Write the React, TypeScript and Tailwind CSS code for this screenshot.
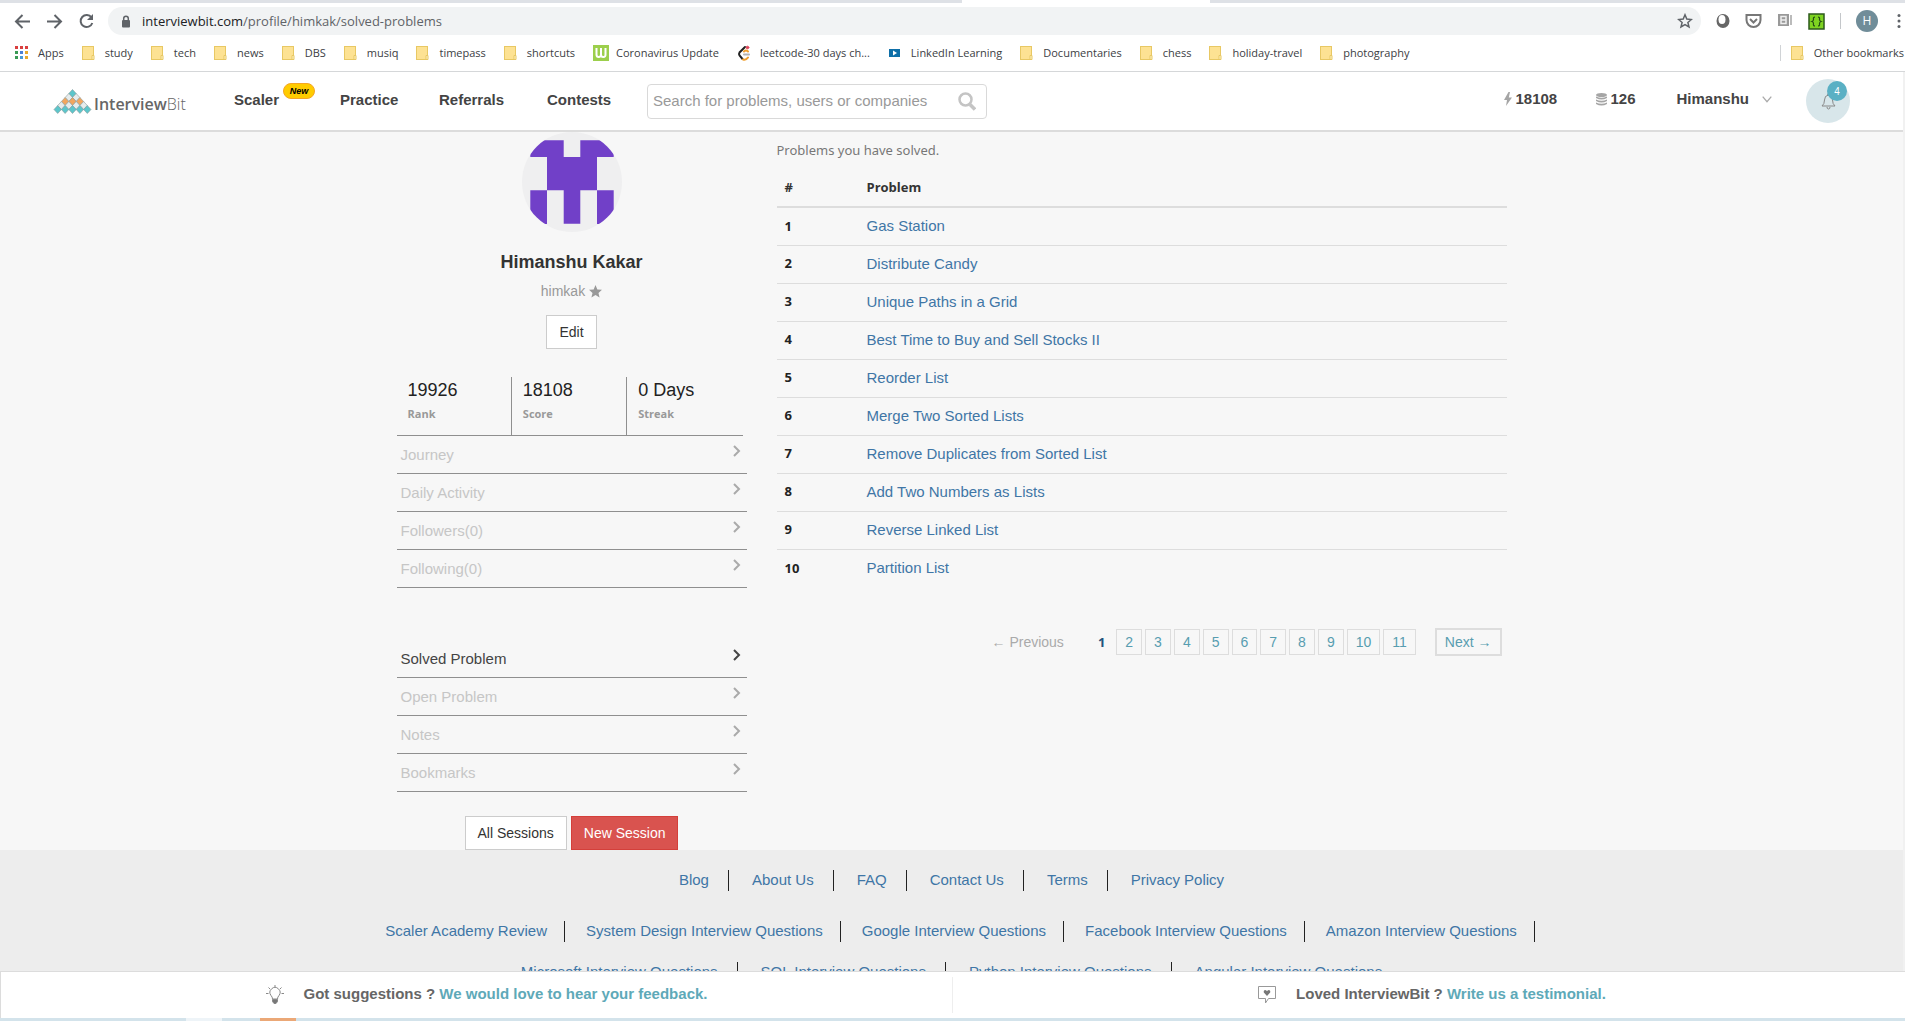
import React from "react";

const problems = [
  "Gas Station",
  "Distribute Candy",
  "Unique Paths in a Grid",
  "Best Time to Buy and Sell Stocks II",
  "Reorder List",
  "Merge Two Sorted Lists",
  "Remove Duplicates from Sorted List",
  "Add Two Numbers as Lists",
  "Reverse Linked List",
  "Partition List",
];

const bookmarks: { label: string; icon: "apps" | "folder" | "w" | "leet" | "linkedin" }[] = [
  { label: "Apps", icon: "apps" },
  { label: "study", icon: "folder" },
  { label: "tech", icon: "folder" },
  { label: "news", icon: "folder" },
  { label: "DBS", icon: "folder" },
  { label: "musiq", icon: "folder" },
  { label: "timepass", icon: "folder" },
  { label: "shortcuts", icon: "folder" },
  { label: "Coronavirus Update", icon: "w" },
  { label: "leetcode-30 days ch...", icon: "leet" },
  { label: "LinkedIn Learning", icon: "linkedin" },
  { label: "Documentaries", icon: "folder" },
  { label: "chess", icon: "folder" },
  { label: "holiday-travel", icon: "folder" },
  { label: "photography", icon: "folder" },
];

function FolderIcon() {
  return (
    <svg width="16" height="16" viewBox="0 0 16 16">
      <rect x="0.500" y="1.500" width="11" height="13" fill="#fde293" stroke="#e8c864" />
      <path d="M10 14.500v-4h2v4z" fill="#fff3c4" stroke="#e8c864" />
    </svg>
  );
}

function BookmarkIcon({ kind }: { kind: string }) {
  if (kind === "folder") return <FolderIcon />;
  if (kind === "apps") {
    const colors = ["#d93f3f", "#d93f3f", "#d93f3f", "#3a9a54", "#4a7fd6", "#e8a92c", "#3a9a54", "#4a9ad6", "#e8a92c"];
    return (
      <svg width="16" height="16" viewBox="0 0 16 16">
        {colors.map((c, i) => (
          <rect key={i} x={(i % 3) * 5} y={1 + Math.floor(i / 3) * 5} width="3" height="3" fill={c} />
        ))}
      </svg>
    );
  }
  if (kind === "w") {
    return (
      <svg width="16" height="16" viewBox="0 0 16 16">
        <rect width="16" height="16" fill="#9ccf4c" />
        <path d="M3.500 3v6.500q0 2.500 2.200 2.500t2.300-2.500V3M8 9.500q0 2.500 2.300 2.500t2.200-2.500V3" fill="none" stroke="#fff" strokeWidth="2" />
      </svg>
    );
  }
  if (kind === "leet") {
    return (
      <svg width="16" height="16" viewBox="0 0 16 16" fill="none" strokeLinecap="round" strokeWidth="2">
        <path d="M8 2 2.500 7.500q-1 1.500 0 3L5.500 14" stroke="#222" />
        <path d="M6 14.500q3 1 5-2M7 6.500q2-2 4 0" stroke="#f0a030" />
        <path d="M7 9.500h5" stroke="#b3b3b3" />
        <circle cx="10.500" cy="2.500" r="1.300" fill="#e0455a" stroke="#e0455a" strokeWidth="1" />
      </svg>
    );
  }
  return (
    <svg width="16" height="16" viewBox="0 0 16 16">
      <rect x="1" y="4" width="11" height="8" fill="#0e6fa8" />
      <path d="M5 5.500v5L9 8z" fill="#fff" />
    </svg>
  );
}

function BrowserChrome() {
  return (
    <div className="shrink-0 border-b border-[#d5d7d9] bg-white font-['Open_Sans',sans-serif]">
      <div className="flex h-[3px] bg-[#dee1e6]">
        <div className="ml-[50.5%] w-[13%] bg-white" />
      </div>
      <div className="flex h-9 items-center pl-3.5 pr-1 text-[#5f6368]">
        <div className="flex w-[94px] shrink-0 items-center gap-[15px]">
          <button aria-label="Back">
            <svg width="17" height="17" viewBox="0 0 17 17" fill="none" stroke="#5f6368" strokeWidth="2"><path d="M16 8.500H2.500M8.500 2 2 8.500 8.500 15" /></svg>
          </button>
          <button aria-label="Forward">
            <svg width="17" height="17" viewBox="0 0 17 17" fill="none" stroke="#5f6368" strokeWidth="2"><path d="M1 8.500h13.500M8.500 2 15 8.500 8.500 15" /></svg>
          </button>
          <button aria-label="Reload">
            <svg width="17" height="17" viewBox="0 0 17 17" fill="none" stroke="#5f6368" strokeWidth="2"><path d="M13.500 4.500A6 6 0 1 0 14.300 10" /><path d="M15 1v6H9z" fill="#5f6368" stroke="none" /></svg>
          </button>
        </div>
        <div className="flex h-7 flex-1 items-center rounded-full bg-[#f1f3f4] pl-[13px] pr-2">
          <svg width="10" height="13" viewBox="0 0 10 13"><rect x="1" y="5" width="8" height="7.500" rx="1" fill="#5f6368" /><path d="M2.700 5V3.500a2.300 2.300 0 0 1 4.600 0V5" fill="none" stroke="#5f6368" strokeWidth="1.500" /></svg>
          <span className="ml-[11px] flex-1 text-[13px] leading-5">
            <span className="text-[#202124]">interviewbit.com</span>/profile/himkak/solved-problems
          </span>
          <button aria-label="Bookmark this page">
            <svg width="16" height="16" viewBox="0 0 16 16" fill="none" stroke="#5f6368" strokeWidth="1.500"><path d="m8 1.800 1.800 4.300 4.600.4-3.500 3 1.100 4.500L8 11.600 4 14l1.100-4.500-3.500-3 4.600-.4z" /></svg>
          </button>
        </div>
        <div className="ml-[15px] flex shrink-0 items-center gap-[15px]">
          <svg width="14" height="16" viewBox="0 0 14 16"><ellipse cx="7" cy="8" rx="6.500" ry="7" fill="#666" /><ellipse cx="6" cy="6.500" rx="3.500" ry="4.500" fill="#fff" /></svg>
          <svg width="17" height="16" viewBox="0 0 17 16" fill="none" stroke="#777" strokeWidth="2"><path d="M1.500 2h14v5a7 7 0 0 1-14 0z" /><path d="m5 6 3.500 3.500L12 6" /></svg>
          <svg width="16" height="16" viewBox="0 0 16 16"><rect x="1" y="1" width="11" height="12" fill="#999" /><rect x="13" y="2" width="2" height="10" fill="#bbb" /><path d="M4 3.500h5v7H4zM4 7h5" fill="none" stroke="#eee" strokeWidth="1.500" /></svg>
          <svg width="17" height="17" viewBox="0 0 17 17"><rect x="1" y="1" width="15" height="15" fill="#7ed321" stroke="#2c5a1b" strokeWidth="1.500" /><path d="M7 4q-2 0-1.500 2.500Q5.500 8 4 8.500q1.500.5 1.500 2Q5 13 7 13M10 4q2 0 1.500 2.500Q11.500 8 13 8.500q-1.500.5-1.500 2Q12 13 10 13" fill="none" stroke="#234d14" strokeWidth="1.200" /></svg>
          <span className="h-4 w-px bg-[#c4c7ca]" />
          <span className="flex size-[22px] items-center justify-center rounded-full bg-[#708d99] text-xs text-white">H</span>
          <button aria-label="Menu" className="pl-1">
            <svg width="4" height="16" viewBox="0 0 4 16" fill="#5f6368"><circle cx="2" cy="2.500" r="1.500" /><circle cx="2" cy="8" r="1.500" /><circle cx="2" cy="13.500" r="1.500" /></svg>
          </button>
        </div>
      </div>
      <nav aria-label="Bookmarks" className="flex h-8 items-center pb-1 pl-[15px] text-[11px] whitespace-nowrap text-[#3c4043]">
        <div className="flex items-center gap-[18px]">
          {bookmarks.map((b) => (
            <a key={b.label} href="#" className="flex items-center gap-[7px]">
              <BookmarkIcon kind={b.icon} />
              {b.label}
            </a>
          ))}
        </div>
        <div className="ml-auto flex items-center border-l border-[#d0d3d6] pr-px pl-2.5">
          <a href="#" className="flex items-center gap-[7px]">
            <FolderIcon />
            Other bookmarks
          </a>
        </div>
      </nav>
    </div>
  );
}

function Logo() {
  const dots: [number, number, string][] = [];
  for (let r = 0; r < 5; r++) {
    for (let i = 0; i <= r; i++) {
      const color = r === 2 ? "#f2a65e" : r % 2 === 0 ? "#5cc6cb" : "#e6ecec";
      dots.push([19 + (i - r / 2) * 7.4, 4.5 + r * 4, color]);
    }
  }
  return (
    <a href="#" className="flex items-end gap-0.5" aria-label="InterviewBit">
      <svg width="39" height="25" viewBox="0 0 38 25">
        {dots.map(([x, y, c], i) => (
          <path key={i} d={`M${x} ${y - 4}l3.700 4-3.700 4-3.700-4z`} fill={c} stroke="#8a9a9a" strokeWidth="0.600" />
        ))}
      </svg>
      <span className="font-['Open_Sans',sans-serif] text-base leading-5 text-[#666]">
        <span className="font-semibold">Interview</span>
        <span className="font-light">Bit</span>
      </span>
    </a>
  );
}

function SiteHeader() {
  return (
    <header className="flex h-[60px] shrink-0 items-center border-b-2 border-[#dcdcdc] bg-white pr-[53px] pl-[53px] text-[15px] font-bold text-[#444]">
      <div className="w-[181px]">
        <Logo />
      </div>
      <nav className="flex items-center pb-0.5 leading-5">
        <a href="#" className="relative w-[106px]">
          Scaler
          <span className="absolute -top-[7px] left-[49px] flex h-4 w-8 items-center justify-center rounded-full border border-[#f5a623] bg-[#ffcc00] text-[9px] leading-3 text-black italic">New</span>
        </a>
        <a href="#" className="w-[99px]">Practice</a>
        <a href="#" className="w-[108px]">Referrals</a>
        <a href="#" className="w-[100px]">Contests</a>
      </nav>
      <label className="mt-px flex h-[35px] w-[340px] items-center rounded-sm border border-[#d9d9d9] pr-2.5 pl-[5px]">
        <input aria-label="Search" placeholder="Search for problems, users or companies" className="min-w-0 flex-1 text-[15px] font-normal outline-none placeholder:text-[#999]" />
        <svg width="18" height="19" viewBox="0 0 18 19" fill="none" stroke="#c4c4c4"><circle cx="7.500" cy="7.500" r="6" strokeWidth="2.500" /><path d="m12 12.500 5 5" strokeWidth="3.500" /></svg>
      </label>
      <div className="ml-auto flex items-center pb-1">
        <span className="flex w-[92px] items-center gap-[3px]">
          <svg width="8" height="14" viewBox="0 0 8 14"><path d="M4.500 0 0 8h3l-1 6 6-8.500H4.800L6 0z" fill="#a5a5a5" /></svg>
          18108
        </span>
        <span className="flex w-20 items-center gap-[3px]">
          <svg width="11" height="13" viewBox="0 0 11 13" fill="#a5a5a5"><ellipse cx="5.500" cy="2" rx="5.500" ry="2" /><path d="M0 3.500q5.500 2.500 11 0V5q-5.500 3-11 0zM0 6.500q5.500 2.500 11 0V8q-5.500 3-11 0zM0 9.500q5.500 2.500 11 0V11q-5.500 3-11 0z" /></svg>
          126
        </span>
        <button className="flex items-center gap-[13px]">
          Himanshu
          <svg width="10" height="7" viewBox="0 0 10 7" fill="none" stroke="#aaa" strokeWidth="1.300"><path d="m.7.7 4.300 5 4.300-5" /></svg>
        </button>
      </div>
      <button aria-label="Notifications" className="relative ml-[34px] flex size-11 items-center justify-center rounded-full bg-[#d8e6ea]">
        <svg width="15" height="17" viewBox="0 0 15 17" fill="none" stroke="#888"><path d="M7.500 2q-4 .5-4 5 0 4-2.500 6h13q-2.500-2-2.500-6 0-4.500-4-5zM6 14q0 2 1.500 2T9 14" /><circle cx="7.500" cy="1.500" r="1" /></svg>
        <span className="absolute top-0.5 right-[3px] flex size-5 items-center justify-center rounded-full bg-[#5ab0c4] text-[10px] font-normal text-white">4</span>
      </button>
    </header>
  );
}

function Avatar() {
  return (
    <svg width="100" height="100" viewBox="0 0 100 100" className="mx-auto block">
      <clipPath id="avatarClip"><circle cx="50" cy="50" r="50" /></clipPath>
      <circle cx="50" cy="50" r="50" fill="#efeff0" />
      <path clipPath="url(#avatarClip)" fill="#7140c8" d="M8.300 8.300H41.700V25H58.300V8.300H91.700V25H75V58.300H91.700V92H75V58.300H58.300V91.700H41.700V58.300H25V92H8.300V58.300H25V25H8.300z" />
    </svg>
  );
}

function SideList({ items, active }: { items: string[]; active?: string }) {
  return (
    <ul>
      {items.map((t) => (
        <li key={t} className="border-b border-[#8f8f8f]">
          <a href="#" className={`flex h-[37px] justify-between px-1 text-[15px] leading-[37px] ${t === active ? "text-[#444]" : "text-[#c6c6c6]"}`}>
            {t}
            <svg width="12" height="12" viewBox="0 0 12 12" fill="none" stroke={t === active ? "#444" : "#aaa"} strokeWidth="2" className="mt-[9px]"><path d="m3 1 5 5-5 5" /></svg>
          </a>
        </li>
      ))}
    </ul>
  );
}

function Sidebar() {
  const stats = [["19926", "Rank"], ["18108", "Score"], ["0 Days", "Streak"]];
  return (
    <aside className="w-[350px] shrink-0">
      <Avatar />
      <h1 className="mt-5 text-center text-lg leading-5 font-bold text-[#333]">Himanshu Kakar</h1>
      <p className="mt-[9px] flex items-center justify-center gap-1 text-sm leading-5 text-[#999]">
        himkak
        <svg width="13" height="13" viewBox="0 0 14 14" fill="#999"><path d="m7 0 2 4.800 5 .4-3.800 3.300 1.200 5L7 10.800l-4.400 2.700 1.200-5L0 5.200l5-.4z" /></svg>
      </p>
      <div className="mt-3.5 flex justify-center">
        <button className="h-[34px] border border-[#ccc] bg-white px-3 text-sm text-[#333]">Edit</button>
      </div>
      <dl className="mt-7 mr-1 grid grid-cols-3 border-b border-[#8f8f8f]">
        {stats.map(([v, l], i) => (
          <div key={l} className={`flex h-[58px] flex-col-reverse justify-end pl-[11px] ${i < 2 ? "border-r border-[#8f8f8f]" : ""}`}>
            <dt className="mt-1 font-['Open_Sans',sans-serif] text-[11px] leading-5 font-bold text-[#999]">{l}</dt>
            <dd className="mt-[3px] text-lg leading-5 text-[#222]">{v}</dd>
          </div>
        ))}
      </dl>
      <SideList items={["Journey", "Daily Activity", "Followers(0)", "Following(0)"]} />
      <div className="h-[52px]" />
      <SideList items={["Solved Problem", "Open Problem", "Notes", "Bookmarks"]} active="Solved Problem" />
      <div className="mt-6 flex justify-center gap-1 text-sm">
        <button className="h-[34px] border border-[#ccc] bg-white px-3 text-[#333]">All Sessions</button>
        <button className="h-[34px] border border-[#d43f3a] bg-[#d9534f] px-3 text-white">New Session</button>
      </div>
    </aside>
  );
}

function SolvedProblems() {
  return (
    <section className="min-w-0 flex-1">
      <p className="pt-2 font-['Noto_Sans',sans-serif] text-[13px] leading-5 text-[#777]">Problems you have solved.</p>
      <table className="mt-2 w-full border-collapse text-left">
        <thead>
          <tr className="h-[39px] border-b-2 border-[#ddd] font-['Open_Sans',sans-serif] text-[13px] text-[#333]">
            <th className="w-[82px] px-2 pt-0.5">#</th>
            <th className="px-2 pt-0.5">Problem</th>
          </tr>
        </thead>
        <tbody>
          {problems.map((p, i) => (
            <tr key={p} className="h-[38px] border-b border-[#ddd] last:border-b-0">
              <th scope="row" className="px-2 font-['Open_Sans',sans-serif] text-[13px] text-[#222]">{i + 1}</th>
              <td className="px-2 text-[15px]"><a href="#" className="text-[#3f76a6]">{p}</a></td>
            </tr>
          ))}
        </tbody>
      </table>
      <nav aria-label="Pages" className="mt-[41px] mr-[5px] flex items-center justify-end gap-[3px] text-sm leading-5 text-[#579db0]">
        <span className="mr-[23px] text-[#aaa]">← Previous</span>
        <span className="px-2 font-['Open_Sans',sans-serif] text-[13px] font-bold text-[#23527c]">1</span>
        {["2", "3", "4", "5", "6", "7", "8", "9", "10", "11"].map((n) => (
          <a key={n} href="#" className="border border-[#ddd] px-2 py-0.5">{n}</a>
        ))}
        <a href="#" className="ml-4 border-2 border-[#ddd] px-2 py-0.5">Next →</a>
      </nav>
    </section>
  );
}

function LinkRow({ items, long }: { items: string[]; long?: boolean }) {
  return (
    <div className="flex justify-center gap-1">
      {items.map((t) => (
        <a
          key={t}
          href="#"
          className={`h-[21px] border-[#222] leading-5 ${long ? "border-r px-[17px]" : "border-r px-[19px] last:border-r-0"}`}
        >
          {t}
        </a>
      ))}
    </div>
  );
}

function SiteFooter() {
  return (
    <footer className="bg-[#ededed] pt-5 text-[15px] whitespace-nowrap text-[#3f76a6]">
      <LinkRow items={["Blog", "About Us", "FAQ", "Contact Us", "Terms", "Privacy Policy"]} />
      <div className="h-[30px]" />
      <LinkRow long items={["Scaler Academy Review", "System Design Interview Questions", "Google Interview Questions", "Facebook Interview Questions", "Amazon Interview Questions"]} />
      <div className="h-5" />
      <LinkRow items={["Microsoft Interview Questions", "SQL Interview Questions", "Python Interview Questions", "Angular Interview Questions"]} />
    </footer>
  );
}

function FeedbackBar() {
  return (
    <div className="shrink-0 text-[15px] leading-5 font-bold text-[#666]">
      <div className="grid h-[47px] grid-cols-2 border-t border-l border-[#dcdcdc] bg-white">
        <div className="my-[5px] flex items-center justify-center gap-5 border-r border-[#eee] pb-0.5 pl-5">
          <svg width="18" height="19" viewBox="0 0 18 19" fill="none" stroke="#888"><path d="M6.500 14q0-2-1.500-3.500a5 5 0 1 1 8 0Q11.500 12 11.500 14zM9 0v2M2.500 2.500 4 4M15.500 2.500 14 4M0 8.500h2.500M15.500 8.500H18" /><path d="M6.500 14.500h5v2L10 18.500H8l-1.500-2z" fill="#777" /></svg>
          <p>Got suggestions ? <a href="#" className="text-[#5ea9b8]">We would love to hear your feedback.</a></p>
        </div>
        <div className="my-[5px] flex items-center justify-center gap-5 pb-0.5 pl-1.5">
          <svg width="18" height="19" viewBox="0 0 18 19" fill="none" stroke="#999"><path d="M.5 1.500h17v12h-7L7.500 18v-4.500h-7z" /><path d="M9 11 5.800 7.500q-.6-2 1-2.500Q8.300 5 9 6.300 9.700 5 11.200 5q1.600.5 1 2.500z" fill="#777" stroke="none" /></svg>
          <p>Loved InterviewBit ? <a href="#" className="text-[#5ea9b8]">Write us a testimonial.</a></p>
        </div>
      </div>
      <div className="flex h-[3px] bg-[#d3e3eb]">
        <div className="ml-[186px] w-9 bg-[#eef4f8]" />
        <div className="ml-[38px] w-9 bg-[#eba877]" />
      </div>
    </div>
  );
}

export default function App() {
  return (
    <div className="flex h-screen flex-col overflow-hidden bg-[#f7f7f7] font-['Liberation_Sans',Arial,sans-serif]">
      <BrowserChrome />
      <div className="flex min-h-0 flex-1 flex-col border-r-2 border-[#f1f1f1]">
        <SiteHeader />
        <main className="min-h-0 flex-1 overflow-hidden">
          <div className="mx-auto flex max-w-[1110px] gap-[30px]">
            <Sidebar />
            <SolvedProblems />
          </div>
          <SiteFooter />
        </main>
      </div>
      <FeedbackBar />
    </div>
  );
}
